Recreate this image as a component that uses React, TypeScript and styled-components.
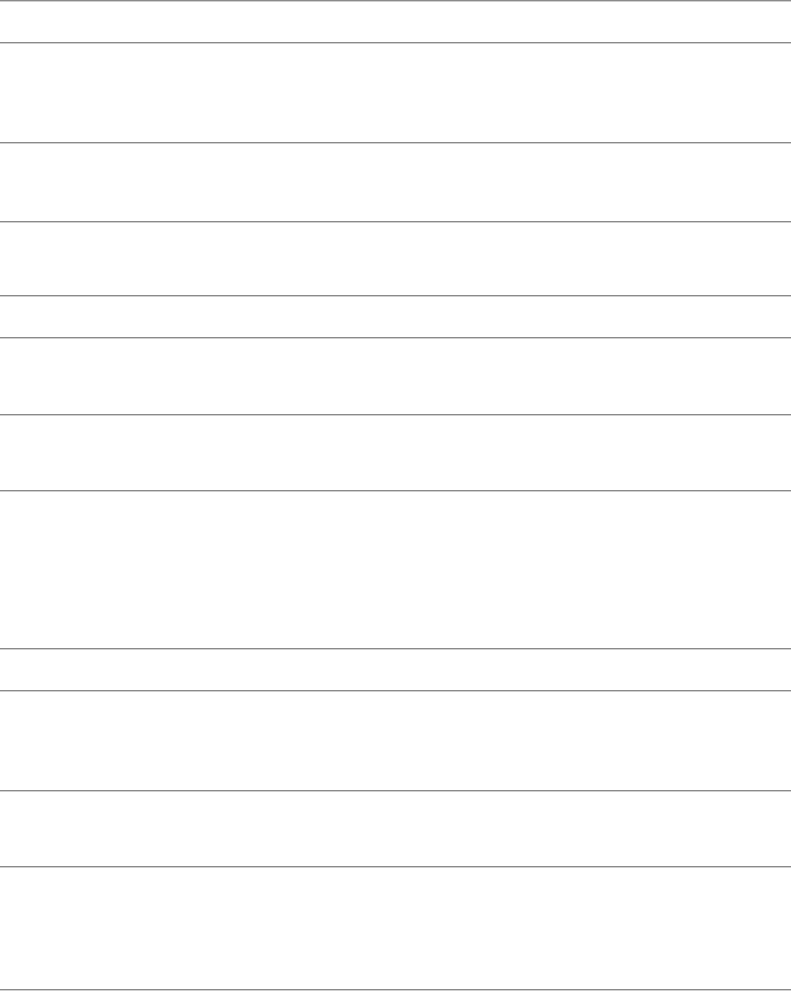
import { createGlobalStyle } from 'styled-components';
import styled from 'styled-components';

const GlobalStyle = createGlobalStyle`
  html, body {
    margin: 0;
    padding: 0;
    background: #ffffff;
    font-family: 'Liberation Sans', Arial, sans-serif;
  }
`;

const Page = styled.main`
  display: flex;
  flex-direction: column;
  width: 791px;
`;

const Rule = styled.hr`
  margin: 0;
  border: 0;
  height: 0;
  border-top: 1px solid #8a8a8a;
  border-bottom: 1px solid #cfcfcf;
`;

const Section = styled.section<{ $height: number }>`
  height: ${(p) => p.$height}px;
`;

// gap between the top edges of consecutive rules
const sections = [42, 100, 79, 74, 42, 77, 76, 158, 42, 100, 76, 123];

const App = () => {
  return (
    <>
      <GlobalStyle />
      <Page>
        <Rule />
        {sections.map((gap, i) => (
          <div key={i}>
            <Section $height={gap - 2} />
            <Rule />
          </div>
        ))}
      </Page>
    </>
  );
};

export default App;
